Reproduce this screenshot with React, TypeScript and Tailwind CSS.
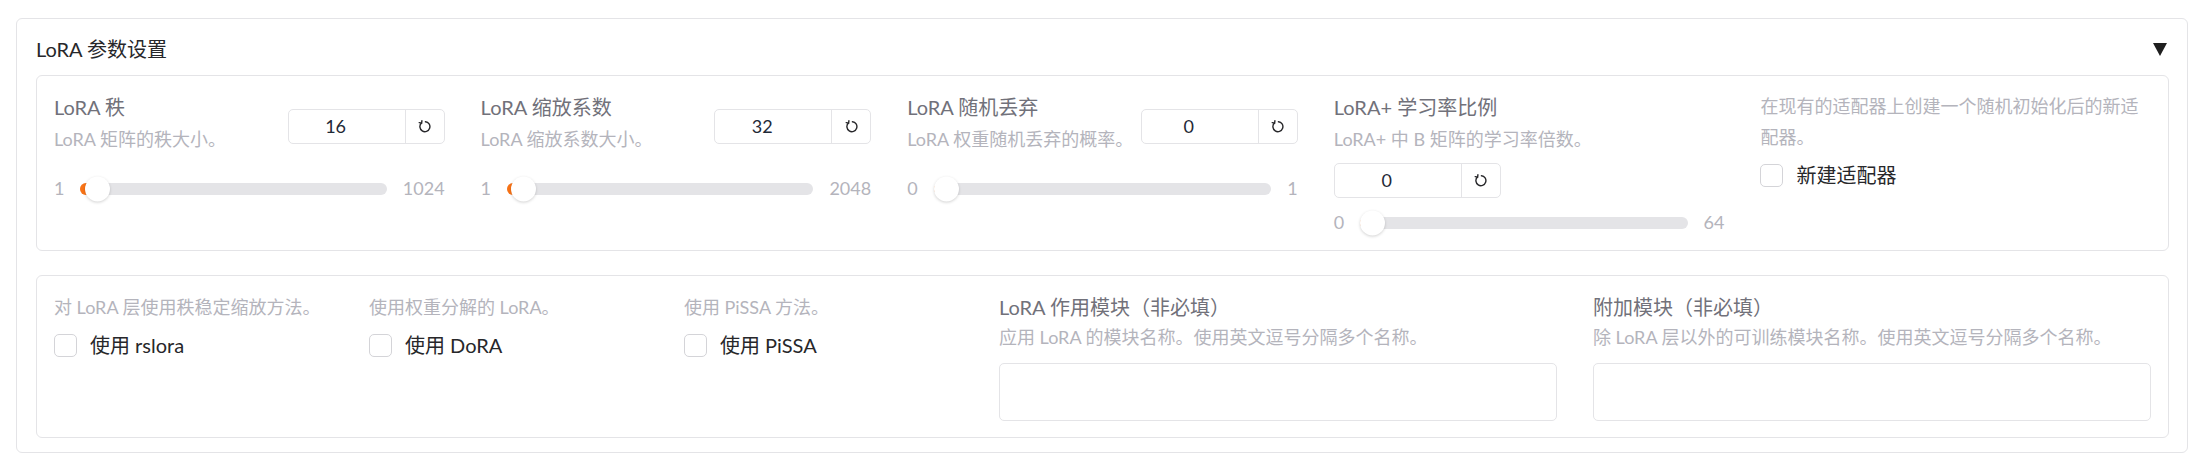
import React from 'react'

interface SliderField {
  label: string
  info: string
  value: number
  min: number
  max: number
}

const sliderFields: SliderField[] = [
  { label: 'LoRA 秩', info: 'LoRA 矩阵的秩大小。', value: 16, min: 1, max: 1024 },
  { label: 'LoRA 缩放系数', info: 'LoRA 缩放系数大小。', value: 32, min: 1, max: 2048 },
  { label: 'LoRA 随机丢弃', info: 'LoRA 权重随机丢弃的概率。', value: 0, min: 0, max: 1 },
]

const plusField: SliderField = {
  label: 'LoRA+ 学习率比例',
  info: 'LoRA+ 中 B 矩阵的学习率倍数。',
  value: 0,
  min: 0,
  max: 64,
}

const toggles = [
  { info: '对 LoRA 层使用秩稳定缩放方法。', label: '使用 rslora' },
  { info: '使用权重分解的 LoRA。', label: '使用 DoRA' },
  { info: '使用 PiSSA 方法。', label: '使用 PiSSA' },
]

const modules = [
  { label: 'LoRA 作用模块（非必填）', info: '应用 LoRA 的模块名称。使用英文逗号分隔多个名称。' },
  { label: '附加模块（非必填）', info: '除 LoRA 层以外的可训练模块名称。使用英文逗号分隔多个名称。' },
]

function ResetIcon() {
  return (
    <svg width="13" height="13" viewBox="0 0 13 13" fill="none" stroke="#27272a" strokeWidth="1.4" strokeLinecap="round">
      <path d="M3.4 3.1 A5 5 0 1 0 7.4 1.7" />
      <path d="M1.2 2.6 L3.6 3.1 L3.9 0.8" />
    </svg>
  )
}

function NumberBox({ value, wide, className = '' }: { value: number; wide?: boolean; className?: string }) {
  return (
    <div
      className={`flex h-[35px] shrink-0 rounded-[5px] border border-[#e4e4e7] ${wide ? 'w-[167px]' : 'w-[157px]'} ${className}`}
    >
      <div className="flex flex-1 items-center justify-center pr-[22px] text-[18px] text-[#1f2937]">{value}</div>
      <div className="flex w-[39px] items-center justify-center border-l border-[#e4e4e7]">
        <ResetIcon />
      </div>
    </div>
  )
}

function Slider({ field, className = '' }: { field: SliderField; className?: string }) {
  const pct = (field.value - field.min) / (field.max - field.min)
  return (
    <div className={`flex h-[25px] items-center gap-4 text-[18px] text-[#b4b4bc] ${className}`}>
      <span>{field.min}</span>
      <div className="relative h-[12px] flex-1 rounded-full bg-[#e4e4e7]">
        <div
          className="absolute left-0 top-0 h-full rounded-l-full bg-[#f97316]"
          style={{ width: `calc(${pct} * (100% - 25px) + 12px)` }}
        />
        <div
          className="absolute top-1/2 h-[25px] w-[25px] -translate-y-1/2 rounded-full bg-white shadow-[0_1px_3px_rgba(0,0,0,0.18)]"
          style={{ left: `calc(${pct} * (100% - 25px))` }}
        />
      </div>
      <span>{field.max}</span>
    </div>
  )
}

function Checkbox({ label, className = '' }: { label: string; className?: string }) {
  return (
    <div className={`flex items-center gap-[13px] ${className}`}>
      <div className="h-[23px] w-[23px] rounded-[5px] border border-[#d4d4d8] bg-white" />
      <span className="text-[20px] leading-[24px] text-[#27272a]">{label}</span>
    </div>
  )
}

export default function App() {
  return (
    <div className="h-[467px] w-[2210px] bg-white pt-[18px] pl-[16px] font-['Lato','Noto_Sans_CJK_SC',sans-serif]">
      <div className="h-[435px] w-[2172px] rounded-[6px] border border-[#e4e4e7] pt-[16px] pl-[19px] pr-[18px]">
        {/* Header */}
        <div className="flex h-[28px] items-center justify-between">
          <span className="text-[20px] text-[#27272a]">LoRA 参数设置</span>
          <svg width="14" height="13" viewBox="0 0 14 13" className="mr-[2px]">
            <polygon points="0,0 14,0 7,13" fill="#1f1f1f" />
          </svg>
        </div>

        {/* Sliders */}
        <div className="mt-[12px] grid h-[176px] grid-cols-5 gap-x-[36px] rounded-[6px] border border-[#e4e4e7] px-[17px] pt-[16px]">
          {sliderFields.map((f) => (
            <div key={f.label}>
              <div className="flex items-start justify-between">
                <div>
                  <div className="text-[20px] leading-[30px] text-[#71717a]">{f.label}</div>
                  <div className="mt-[2px] text-[18px] leading-[31px] text-[#b4b4bc]">{f.info}</div>
                </div>
                <NumberBox value={f.value} className="mt-[17px]" />
              </div>
              <Slider field={f} className="mt-[21px]" />
            </div>
          ))}

          <div>
            <div className="text-[20px] leading-[30px] text-[#71717a]">{plusField.label}</div>
            <div className="mt-[2px] text-[18px] leading-[31px] text-[#b4b4bc]">{plusField.info}</div>
            <NumberBox value={plusField.value} wide className="mt-[8px]" />
            <Slider field={plusField} className="mt-[12px]" />
          </div>

          <div>
            <div className="-mt-[1px] text-[18px] leading-[31px] text-[#b4b4bc]">
              在现有的适配器上创建一个随机初始化后的新适配器。
            </div>
            <Checkbox label="新建适配器" className="mt-[10px]" />
          </div>
        </div>

        {/* Toggles and modules */}
        <div className="mt-[24px] grid h-[163px] grid-cols-[279px_279px_279px_1fr_1fr] gap-x-[36px] rounded-[6px] border border-[#e4e4e7] px-[17px] pt-[16px]">
          {toggles.map((t) => (
            <div key={t.label}>
              <div className="text-[18px] leading-[31px] text-[#b4b4bc]">{t.info}</div>
              <Checkbox label={t.label} className="mt-[10px]" />
            </div>
          ))}
          {modules.map((m) => (
            <div key={m.label}>
              <div className="text-[20px] leading-[30px] text-[#71717a]">{m.label}</div>
              <div className="text-[18px] leading-[31px] text-[#b4b4bc]">{m.info}</div>
              <div className="mt-[10px] h-[58px] w-full rounded-[5px] border border-[#e4e4e7]" />
            </div>
          ))}
        </div>
      </div>
    </div>
  )
}
